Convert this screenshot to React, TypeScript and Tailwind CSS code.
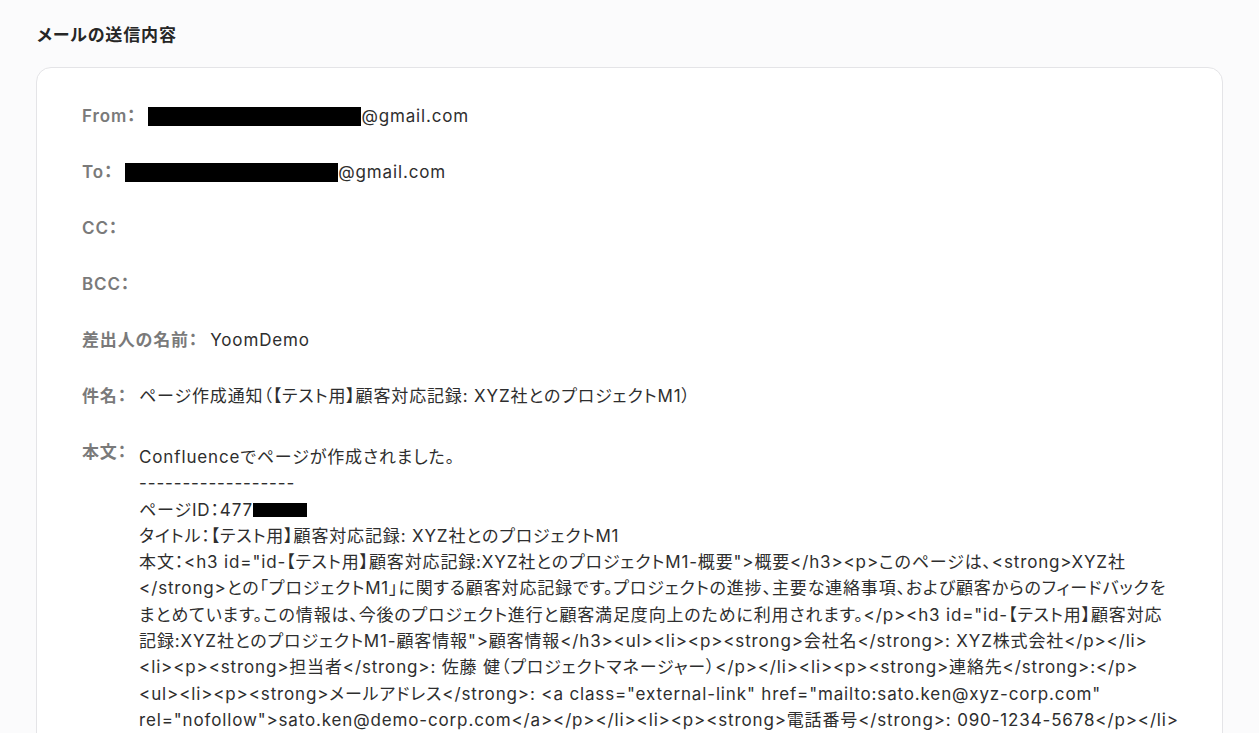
import React from "react";

const base =
  "font-['Inter','Noto_Sans_CJK_JP',sans-serif] [font-feature-settings:'palt'] tracking-[0.05em]";

const bodyLines: React.ReactNode[] = [
  "Confluenceでページが作成されました。",
  "------------------",
  <span className="inline-flex items-center">
    ページID：477<span className="inline-block w-[54px] h-[14px] bg-black" />
  </span>,
  "タイトル：【テスト用】顧客対応記録: XYZ社とのプロジェクトM1",
  '本文：<h3 id="id-【テスト用】顧客対応記録:XYZ社とのプロジェクトM1-概要">概要</h3><p>このページは、<strong>XYZ社',
  "</strong>との「プロジェクトM1」に関する顧客対応記録です。プロジェクトの進捗、主要な連絡事項、および顧客からのフィードバックを",
  'まとめています。この情報は、今後のプロジェクト進行と顧客満足度向上のために利用されます。</p><h3 id="id-【テスト用】顧客対応',
  '記録:XYZ社とのプロジェクトM1-顧客情報">顧客情報</h3><ul><li><p><strong>会社名</strong>: XYZ株式会社</p></li>',
  "<li><p><strong>担当者</strong>: 佐藤 健（プロジェクトマネージャー）</p></li><li><p><strong>連絡先</strong>:</p>",
  '<ul><li><p><strong>メールアドレス</strong>: <a class="external-link" href="mailto:sato.ken@xyz-corp.com"',
  'rel="nofollow">sato.ken@demo-corp.com</a></p></li><li><p><strong>電話番号</strong>: 090-1234-5678</p></li>',
  '</ul></li></ul><h3 id="id-【テスト用】顧客対応記録:XYZ社とのプロジェクトM1-プロジェクト概要">プロジェクト概要</h3>',
  "<ul><li><p><strong>プロジェクト名</strong>: M1</p></li></ul>",
];

function Row({
  label,
  children,
}: {
  label: string;
  children?: React.ReactNode;
}) {
  return (
    <div className="flex items-center leading-[26px]">
      <span className="font-semibold text-[#7a7a7a] whitespace-nowrap">{label}</span>
      <span className="ml-[12px] flex items-center text-[#2e2e2e] whitespace-nowrap">{children}</span>
    </div>
  );
}

export default function App() {
  return (
    <div className={`${base} min-h-screen bg-[#fbfbfc] px-9 pt-[22px] pb-10 text-[17px]`}>
      <h2 className="text-[17px] font-bold leading-[26px] text-[#262626] pl-px">メールの送信内容</h2>
      <div className="mt-[19px] rounded-[15px] border border-[#e4e4e7] bg-white pl-[45px] pr-6 pt-[35px] pb-10">
        <div className="flex flex-col gap-[30px]">
          <Row label="From：">
            <span className="inline-block h-[19px] w-[213px] bg-black" />
            @gmail.com
          </Row>
          <Row label="To：">
            <span className="inline-block h-[19px] w-[213px] bg-black" />
            @gmail.com
          </Row>
          <Row label="CC：" />
          <Row label="BCC：" />
          <Row label="差出人の名前：">YoomDemo</Row>
          <Row label="件名：">
            ページ作成通知（【テスト用】顧客対応記録: XYZ社とのプロジェクトM1）
          </Row>
          <div className="flex items-start leading-[26px]">
            <span className="font-semibold text-[#7a7a7a] whitespace-nowrap">本文：</span>
            <div className="ml-[12px] mt-[5px] text-[#2e2e2e] leading-[26.3px]">
              {bodyLines.map((l, i) => (
                <div key={i} className="whitespace-pre">
                  {l}
                </div>
              ))}
            </div>
          </div>
        </div>
      </div>
    </div>
  );
}
